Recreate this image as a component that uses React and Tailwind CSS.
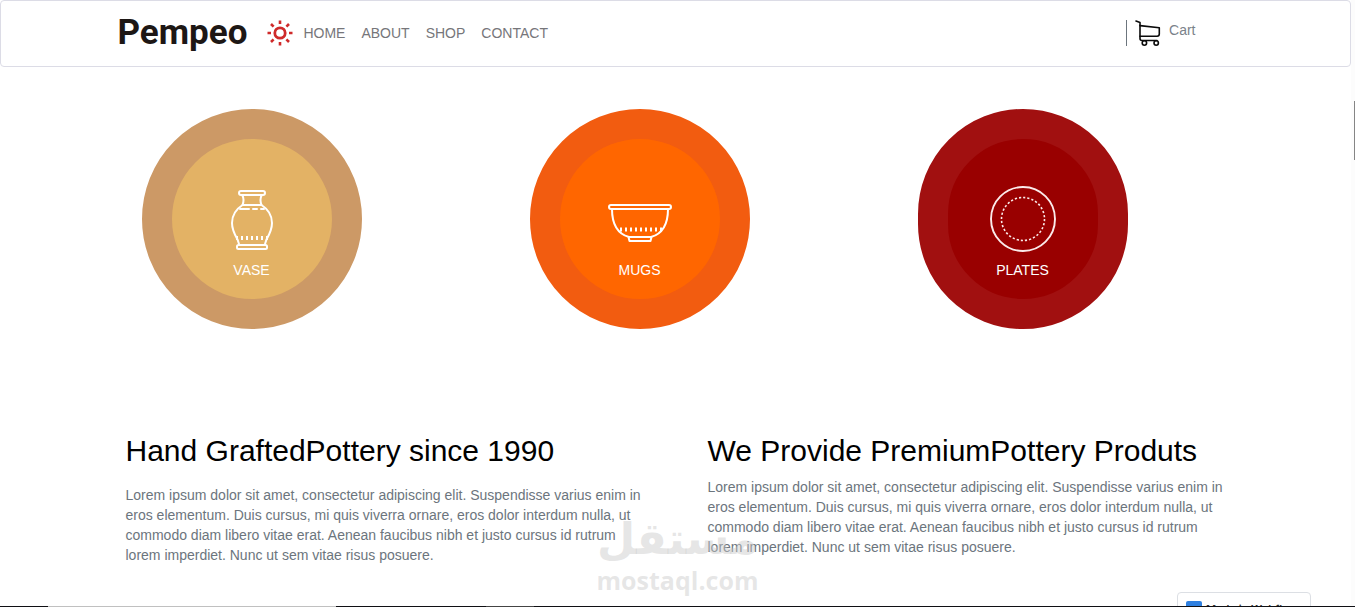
import React from "react";

const lorem =
  "Lorem ipsum dolor sit amet, consectetur adipiscing elit. Suspendisse varius enim in eros elementum. Duis cursus, mi quis viverra ornare, eros dolor interdum nulla, ut commodo diam libero vitae erat. Aenean faucibus nibh et justo cursus id rutrum lorem imperdiet. Nunc ut sem vitae risus posuere.";

const links = ["HOME", "ABOUT", "SHOP", "CONTACT"];

const SunIcon = () => (
  <svg width="26" height="26" viewBox="0 0 26 26" fill="none" stroke="#cf2a2a">
    <circle cx="13" cy="13" r="5.2" strokeWidth="2.8" />
    <path
      strokeWidth="2.6"
      d="M13 0.5v3.5M13 22v3.5M0.5 13H4M22 13h3.5M4 4l2.6 2.6M19.4 19.4L22 22M4 22l2.6-2.6M19.4 6.6L22 4"
    />
  </svg>
);

const CartIcon = () => (
  <svg
    width="26"
    height="26"
    viewBox="0 0 26 26"
    fill="none"
    stroke="#0a0a0a"
    strokeWidth="1.6"
    strokeLinecap="round"
    strokeLinejoin="round"
  >
    <path d="M1 1l4 1.4V18.5q0 2 2 2H22" />
    <path d="M5 5.6L24.3 7.8V14q0 2.2-2.2 2.2H5" />
    <circle cx="9.4" cy="23" r="2.2" />
    <circle cx="21.2" cy="23" r="2.2" />
  </svg>
);

const VaseIcon = () => (
  <svg
    width="66"
    height="66"
    viewBox="0 -1 66 66"
    fill="none"
    stroke="#fff"
    strokeWidth="2"
    strokeLinecap="round"
  >
    <rect x="20" y="4" width="26" height="4" rx="2" />
    <path d="M23.5 8.5c1.4 3 1.4 6 0 9.5C16.500 22.500 13 28.500 13 36c0 7 3 12 5.500 16.500L20 57" />
    <path d="M42.500 8.500c-1.400 3-1.400 6 0 9.500C49.500 22.500 53 28.500 53 36c0 7-3 12-5.500 16.500L46 57" />
    <path d="M23.5 18h19M21 22h9M34 22h4M42 22h3" />
    <path
      strokeLinecap="butt"
      d="M18 49v4M23 49v4M28 49v4M33 49v4M38 49v4M43 49v4M48 49v4"
    />
    <rect x="18" y="58" width="30" height="4" rx="1.5" />
  </svg>
);

const BowlIcon = () => (
  <svg
    width="66"
    height="66"
    viewBox="0 -1 66 66"
    fill="none"
    stroke="#fff"
    strokeWidth="2"
  >
    <rect x="2" y="18" width="62" height="4" rx="2" />
    <path d="M5 22c0 15 6 25 17 28h22c11-3 17-13 17-28" />
    <path d="M21.5 50l1 4h21l1-4" strokeLinejoin="round" />
    <path d="M14 40.500v4M19 40.500v4M24 40.500v4M29 40.500v4M34 40.500v4M39 40.500v4M44 40.500v4M49 40.500v4M54 40.500v4" />
  </svg>
);

const PlateIcon = () => (
  <svg width="66" height="66" viewBox="0 0 66 66" fill="none" stroke="#fbeaea">
    <circle cx="33" cy="33" r="32" strokeWidth="1.9" />
    <circle cx="33" cy="33" r="21.5" strokeWidth="1.6" strokeDasharray="2.2 2" />
  </svg>
);

const categories = [
  {
    name: "VASE",
    icon: <VaseIcon />,
    style: "w-[220px] border-[#cc9966] bg-[#e3b265]",
  },
  {
    name: "MUGS",
    icon: <BowlIcon />,
    style: "w-[220px] border-[#f25c10] bg-[#ff6600]",
  },
  {
    name: "PLATES",
    icon: <PlateIcon />,
    style: "w-[210px] border-[#a11010] bg-[#990000]",
  },
];

const Header = () => (
  <header className="rounded border border-[#dcdce6]">
    <div className="mx-auto flex h-[65px] max-w-[1164px] items-center pb-0.5 pl-6 pr-[62px]">
      <a
        href="#"
        className="font-['Roboto',sans-serif] text-[35px] leading-10 font-bold text-[#1d1715]"
      >
        Pempeo
      </a>
      <nav className="ml-5 flex items-center gap-4 text-[#76767a]">
        <div className="flex items-center gap-2.5">
          <SunIcon />
          <a href="#">{links[0]}</a>
        </div>
        {links.slice(1).map((link) => (
          <a key={link} href="#">
            {link}
          </a>
        ))}
      </nav>
      <a
        href="#"
        className="ml-auto flex gap-2 border-l border-[#6c757d] pl-2 text-[#7b828a]"
      >
        <CartIcon />
        <span>Cart</span>
      </a>
    </div>
  </header>
);

const Watermark = () => (
  <div className="pointer-events-none absolute inset-x-0 top-[514px] flex flex-col items-center text-[#c8c8c8]/45">
    <span
      lang="ar"
      dir="rtl"
      className="font-['DejaVu_Sans',sans-serif] text-[44px] leading-[50px] font-bold"
    >
      مستقل
    </span>
    <span className="font-['Open_Sans',sans-serif] text-[25px] leading-8 font-bold">
      mostaql.com
    </span>
  </div>
);

const WebflowBadge = () => (
  <a
    href="#"
    className="absolute top-[592px] right-10 flex items-center gap-1 rounded border border-[#dcdfe4] bg-white p-2 font-['Inter',sans-serif] text-[11px] leading-4 font-semibold whitespace-nowrap text-[#333]"
  >
    <span className="h-4 w-4 rounded-xs bg-[#2f80e0]" />
    <span className="pr-1">Made in Webflow</span>
  </a>
);

const App = () => {
  return (
    <div className="relative flex h-screen flex-col overflow-hidden bg-white font-['Liberation_Sans',Arial,sans-serif] text-sm leading-5">
      <div className="flex min-h-0 flex-1">
        <div className="relative min-w-0 flex-1 overflow-hidden">
          <Header />

          <section className="mx-auto mt-[42px] grid max-w-[1164px] grid-cols-3">
            {categories.map((item) => (
              <div key={item.name} className="pl-12">
                <a
                  href="#"
                  className={`flex h-[220px] flex-col items-center rounded-full border-[30px] pt-[47px] text-white ${item.style}`}
                >
                  {item.icon}
                  <span className="mt-2">{item.name}</span>
                </a>
              </div>
            ))}
          </section>

          <section className="mx-auto mt-[104px] grid max-w-[1164px] grid-cols-2 text-[#6c757d]">
            <div className="px-8">
              <h2 className="mb-4 text-3xl text-black">
                Hand GraftedPottery since 1990
              </h2>
              <p>{lorem}</p>
            </div>
            <div className="px-8">
              <h2 className="mb-2 text-3xl text-black">
                We Provide PremiumPottery Produts
              </h2>
              <p>{lorem}</p>
            </div>
          </section>

          <WebflowBadge />
        </div>

        {/* scroll track */}
        <div className="flex w-1 flex-col items-end bg-[#fcfcfc] pt-[101px]">
          <div className="h-[59px] w-px bg-[#858585]" />
        </div>
      </div>

      {/* bottom strip */}
      <div className="flex h-px shrink-0 bg-[#101014]">
        <div className="ml-12 w-72 bg-[#c0c0c0]" />
        <div className="ml-[150px] w-12 bg-[#444]" />
      </div>

      <Watermark />
    </div>
  );
};

export default App;
